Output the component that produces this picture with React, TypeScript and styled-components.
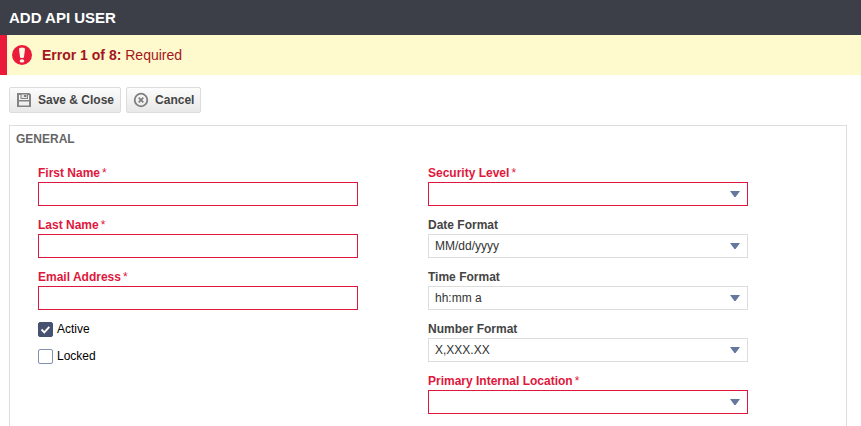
import React, { useId, useState } from "react";
import styled, { createGlobalStyle, css } from "styled-components";

const GlobalStyle = createGlobalStyle`
  *, *::before, *::after { box-sizing: border-box; }
  body {
    margin: 0;
    background: #fff;
    color: #444;
    font-family: "Liberation Sans", Arial, Helvetica, sans-serif;
    font-size: 12px;
    line-height: 16px;
  }
  button, input, select { font: inherit; }
`;

const Page = styled.div`
  min-height: 100vh;
  display: flex;
  flex-direction: column;
`;

const Header = styled.header`
  padding: 8px 9px;
  background: #3c3f48;
`;

const Title = styled.h1`
  margin: 0;
  color: #fff;
  font-size: 15px;
  line-height: 19px;
  font-weight: bold;
`;

const Alert = styled.div`
  display: flex;
  align-items: center;
  gap: 10px;
  padding: 10px 5px;
  border-left: 7px solid #e91a3a;
  background: #fffacd;
  color: #a31621;
  font-size: 14px;
  line-height: 20px;
`;

const Toolbar = styled.div`
  display: flex;
  gap: 5px;
  padding: 12px 9px;
`;

const ToolButton = styled.button`
  display: flex;
  align-items: center;
  gap: 6px;
  height: 26px;
  padding: 0 6px;
  border: 1px solid #dcdcdc;
  border-radius: 2px;
  background: linear-gradient(#fcfcfc, #e8e8e8);
  color: #444;
  font-weight: bold;
  cursor: pointer;
`;

const Panel = styled.section`
  flex: 1;
  margin: 0 14px 0 9px;
  padding: 5px 6px 12px;
  border: 1px solid #ddd;
  border-bottom: 0;
`;

const PanelTitle = styled.h2`
  margin: 0;
  color: #666;
  font-size: 12px;
  line-height: 16px;
  font-weight: bold;
`;

const Columns = styled.div`
  display: flex;
  gap: 70px;
  padding: 18px 22px 0;
`;

const Column = styled.div`
  flex: 0 1 320px;
  min-width: 0;
  display: flex;
  flex-direction: column;
  gap: 11px;
`;

const FieldBox = styled.div`
  display: flex;
  flex-direction: column;
  gap: 1px;
`;

const Label = styled.label<{ $required?: boolean }>`
  display: flex;
  gap: 2px;
  color: ${(p) => (p.$required ? "#e0173c" : "#444")};
  font-weight: bold;
`;

const Star = styled.span`
  font-weight: normal;
`;

const controlStyle = css<{ $required?: boolean }>`
  width: 100%;
  height: 24px;
  padding: 0 6px;
  border: 1px solid ${(p) => (p.$required ? "#e0173c" : "#ddd")};
  border-radius: 0;
  background: #fff;
  color: #333;
`;

const TextInput = styled.input<{ $required?: boolean }>`
  ${controlStyle}
`;

const SelectWrap = styled.div`
  display: grid;
  align-items: center;
  > * { grid-area: 1 / 1; }
`;

const SelectInput = styled.select<{ $required?: boolean }>`
  ${controlStyle}
  appearance: none;
`;

const Arrow = styled.svg`
  justify-self: end;
  margin-right: 8px;
  pointer-events: none;
`;

const Checks = styled.div`
  display: flex;
  flex-direction: column;
  gap: 11px;
`;

const CheckRow = styled.label`
  display: flex;
  align-items: center;
  align-self: flex-start;
  gap: 4px;
  color: #000;
`;

const CheckBox = styled.span`
  display: grid;
  width: 15px;
  height: 15px;
  > * { grid-area: 1 / 1; }
`;

const CheckInput = styled.input`
  appearance: none;
  width: 15px;
  height: 15px;
  margin: 0;
  border: 1px solid #8290b3;
  border-radius: 2px;
  background: #fff;
  &:checked { border-color: #465270; background: #465270; }
`;

const Tick = styled.svg`
  pointer-events: none;
`;

function ErrorIcon() {
  return (
    <svg width="20" height="20" viewBox="0 0 20 20" aria-hidden="true">
      <circle cx="10" cy="10" r="10" fill="#e91a3a" />
      <path d="M7 4.2Q7 2.6 10 2.6Q13 2.6 13 4.2L11.9 12.4Q10 13.6 8.1 12.4Z" fill="#fff6e4" />
      <ellipse cx="10" cy="15.9" rx="2.3" ry="1.7" fill="#fff6e4" />
    </svg>
  );
}

function SaveIcon() {
  return (
    <svg width="16" height="16" viewBox="0 0 16 16" aria-hidden="true">
      <path
        fillRule="evenodd"
        d="M1 1H13.5L15 2.5V15H1ZM3 3V8H13V3.5L12.5 3H12V7H4.5V3ZM3 9.5V13.5H13V9.5Z"
        fill="#848484"
      />
      <path d="M5.5 2.5H11V6H5.5Z" fill="#e4e4e4" />
      <path d="M8 3H10.5V5H8Z" fill="#808080" />
    </svg>
  );
}

function CancelIcon() {
  return (
    <svg width="16" height="16" viewBox="0 0 16 16" fill="none" stroke="#808080" aria-hidden="true">
      <circle cx="8" cy="8" r="6.3" strokeWidth="1.8" />
      <path d="M5.7 5.7L10.3 10.3M10.3 5.7L5.7 10.3" strokeWidth="1.8" />
    </svg>
  );
}

type FieldProps = { label: string; required?: boolean; value?: string; select?: boolean };

function Field({ label, required, value = "", select }: FieldProps) {
  const id = useId();
  const [current, setCurrent] = useState(value);
  return (
    <FieldBox>
      <Label htmlFor={id} $required={required}>
        {label}
        {required && <Star>*</Star>}
      </Label>
      {select ? (
        <SelectWrap>
          <SelectInput
            id={id}
            $required={required}
            value={current}
            onChange={(e) => setCurrent(e.target.value)}
          >
            <option value={value}>{value}</option>
          </SelectInput>
          <Arrow width="10" height="6" viewBox="0 0 10 6" aria-hidden="true">
            <path d="M0 0H10L5.6 6H4.4Z" fill="#66779d" />
          </Arrow>
        </SelectWrap>
      ) : (
        <TextInput
          id={id}
          type="text"
          $required={required}
          value={current}
          onChange={(e) => setCurrent(e.target.value)}
        />
      )}
    </FieldBox>
  );
}

function Check({ label, initial = false }: { label: string; initial?: boolean }) {
  const [checked, setChecked] = useState(initial);
  return (
    <CheckRow>
      <CheckBox>
        <CheckInput
          type="checkbox"
          checked={checked}
          onChange={(e) => setChecked(e.target.checked)}
        />
        {checked && (
          <Tick width="15" height="15" viewBox="0 0 15 15" aria-hidden="true">
            <path d="M3.5 7.5L6.3 10.3L11.3 4.8" fill="none" stroke="#fff" strokeWidth="1.9" />
          </Tick>
        )}
      </CheckBox>
      {label}
    </CheckRow>
  );
}

export default function App() {
  return (
    <Page>
      <GlobalStyle />
      <Header>
        <Title>ADD API USER</Title>
      </Header>
      <Alert role="alert">
        <ErrorIcon />
        <span>
          <b>Error 1 of 8:</b> Required
        </span>
      </Alert>
      <Toolbar>
        <ToolButton type="button">
          <SaveIcon />
          Save &amp; Close
        </ToolButton>
        <ToolButton type="button">
          <CancelIcon />
          Cancel
        </ToolButton>
      </Toolbar>
      <Panel>
        <PanelTitle>GENERAL</PanelTitle>
        <Columns>
          <Column>
            <Field label="First Name" required />
            <Field label="Last Name" required />
            <Field label="Email Address" required />
            <Checks>
              <Check label="Active" initial />
              <Check label="Locked" />
            </Checks>
          </Column>
          <Column>
            <Field label="Security Level" required select />
            <Field label="Date Format" value="MM/dd/yyyy" select />
            <Field label="Time Format" value="hh:mm a" select />
            <Field label="Number Format" value="X,XXX.XX" select />
            <Field label="Primary Internal Location" required select />
          </Column>
        </Columns>
      </Panel>
    </Page>
  );
}
